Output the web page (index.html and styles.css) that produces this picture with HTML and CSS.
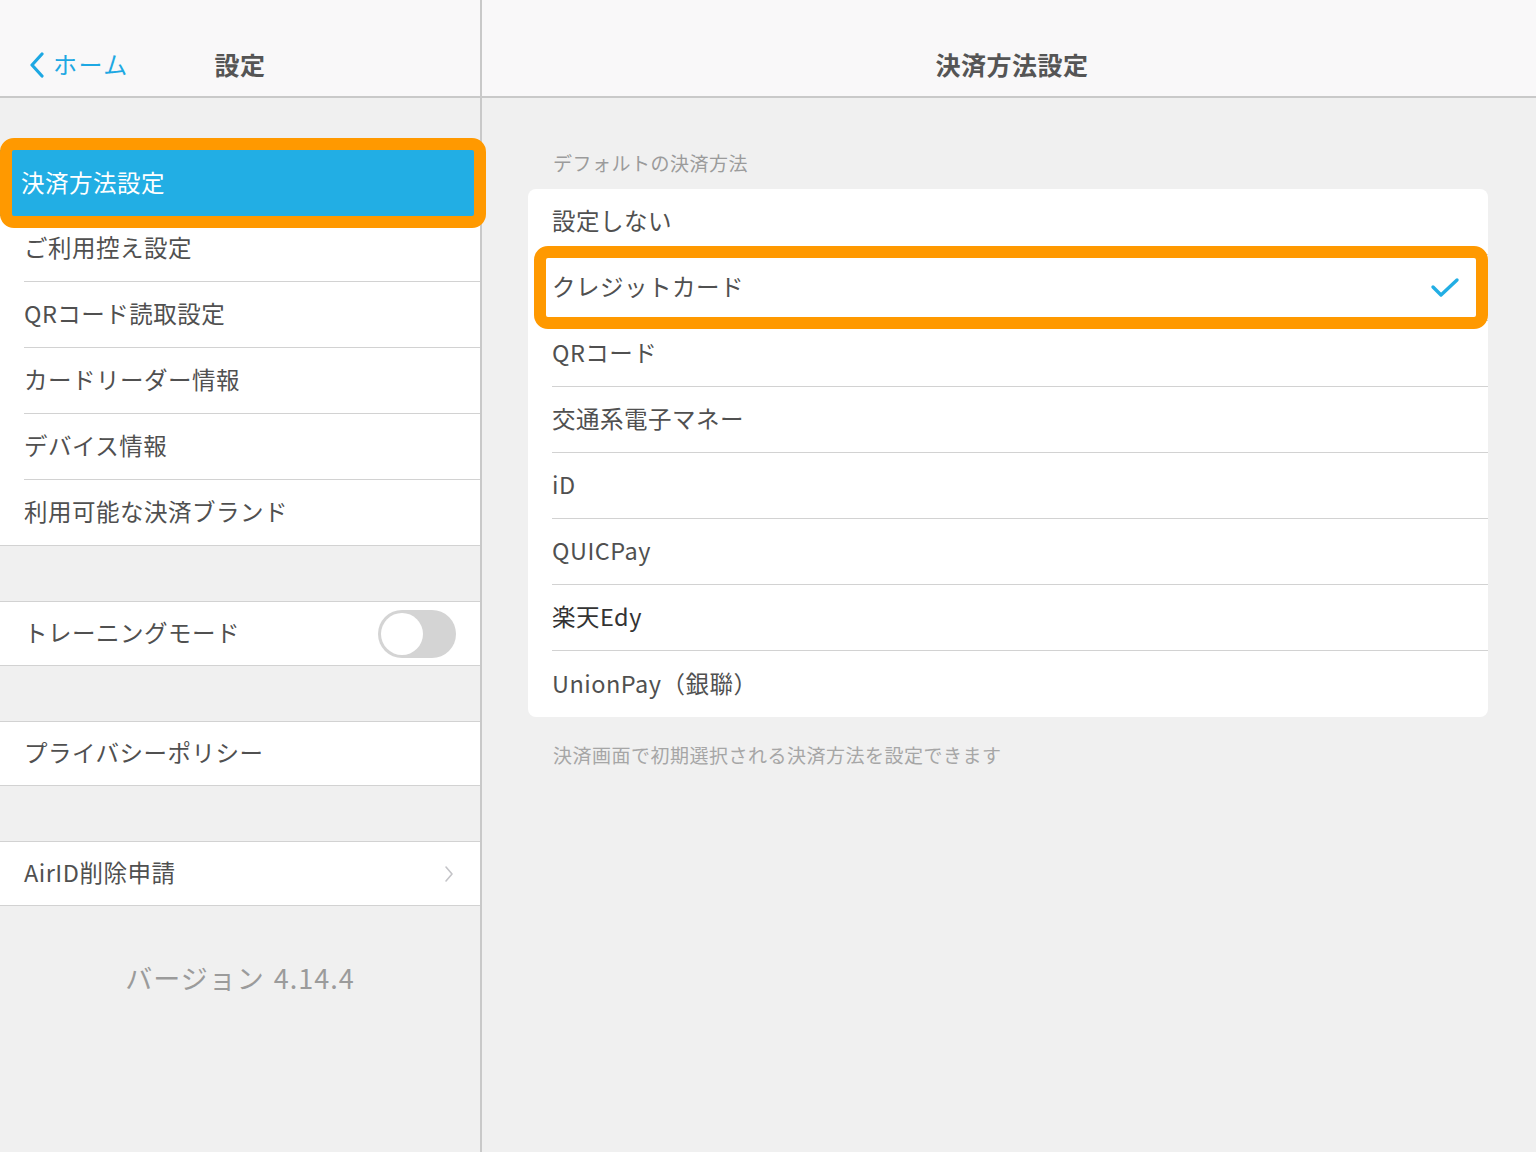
FILE: index.html
```html
<!DOCTYPE html>
<html lang="ja">
<head>
    <meta charset="UTF-8">
    <meta name="viewport" content="width=device-width, initial-scale=1.0">
    <title>決済方法設定</title>
    <link rel="stylesheet" href="styles.css">
</head>
<body>

<aside class="sidebar">
    <header class="navbar navbar-split">
        <a class="back-link" href="#">
            <svg class="back-icon" width="16" height="26" viewBox="0 0 16 26">
                <path d="M13 2 L3 13 L13 24" fill="none" stroke="currentColor" stroke-width="3.2" stroke-linecap="round" stroke-linejoin="round"/>
            </svg>
            <span>ホーム</span>
        </a>
        <h1 class="navbar-title">設定</h1>
        <span></span>
    </header>

    <div class="sidebar-body">
        <ul class="group group-first">
            <li class="row selected">
                <span class="row-label">決済方法設定</span>
                <span class="highlight highlight-menu"></span>
            </li>
            <li class="row"><span class="row-label">ご利用控え設定</span></li>
            <li class="row"><span class="row-label">QRコード読取設定</span></li>
            <li class="row"><span class="row-label">カードリーダー情報</span></li>
            <li class="row"><span class="row-label">デバイス情報</span></li>
            <li class="row"><span class="row-label">利用可能な決済ブランド</span></li>
        </ul>

        <ul class="group">
            <li class="row row-single">
                <span class="row-label">トレーニングモード</span>
                <span class="toggle"><span class="toggle-knob"></span></span>
            </li>
        </ul>

        <ul class="group">
            <li class="row row-single"><span class="row-label">プライバシーポリシー</span></li>
        </ul>

        <ul class="group">
            <li class="row row-single">
                <span class="row-label">AirID削除申請</span>
                <svg class="chevron" width="10" height="18" viewBox="0 0 10 18">
                    <path d="M2 2 L8 9 L2 16" fill="none" stroke="currentColor" stroke-width="1.6" stroke-linecap="round" stroke-linejoin="round"/>
                </svg>
            </li>
        </ul>

        <p class="version">バージョン 4.14.4</p>
    </div>
</aside>

<main class="main">
    <header class="navbar">
        <h1 class="navbar-title">決済方法設定</h1>
    </header>

    <div class="main-body">
        <h2 class="section-title">デフォルトの決済方法</h2>
        <ul class="card">
            <li class="card-row"><span class="card-label">設定しない</span></li>
            <li class="card-row checked">
                <span class="card-label">クレジットカード
                    <svg class="check" width="30" height="22" viewBox="0 0 30 22">
                        <path d="M3 10 L11 18 L27 3" fill="none" stroke="currentColor" stroke-width="3.4" stroke-linecap="round" stroke-linejoin="round"/>
                    </svg>
                </span>
                <span class="highlight highlight-option"></span>
            </li>
            <li class="card-row"><span class="card-label">QRコード</span></li>
            <li class="card-row"><span class="card-label">交通系電子マネー</span></li>
            <li class="card-row"><span class="card-label">iD</span></li>
            <li class="card-row"><span class="card-label">QUICPay</span></li>
            <li class="card-row"><span class="card-label dark">楽天Edy</span></li>
            <li class="card-row"><span class="card-label">UnionPay（銀聯）</span></li>
        </ul>
        <p class="section-note">決済画面で初期選択される決済方法を設定できます</p>
    </div>
</main>

</body>
</html>
```

FILE: styles.css
```css
* {
    box-sizing: border-box;
}
body {
    margin: 0;
    height: 100vh;
    display: flex;
    font-family: "Noto Sans CJK JP", "Noto Sans", sans-serif;
    color: #505050;
    background-color: #f0f0f0;
    letter-spacing: 0.5px;
    overflow: hidden;
}
ul {
    list-style: none;
    margin: 0;
    padding: 0;
}
h1, h2, p {
    margin: 0;
}

/* Navigation bars */
.navbar {
    height: 98px;
    padding-top: 31px;
    display: flex;
    align-items: center;
    justify-content: center;
    background-color: #f9f8f9;
    border-bottom: 2px solid #c9c9c9;
}
.navbar-split {
    display: grid;
    grid-template-columns: 1fr auto 1fr;
}
.navbar-title {
    font-size: 25px;
    font-weight: 700;
    color: #555555;
}
.main .navbar-title {
    margin-left: 6px;
}
.back-link {
    display: flex;
    align-items: center;
    gap: 8px;
    padding-left: 29px;
    color: #1ea8e3;
    text-decoration: none;
    font-size: 24px;
    letter-spacing: 1.5px;
}
.back-icon {
    margin-top: 3px;
}

/* Sidebar */
.sidebar {
    width: 482px;
    flex-shrink: 0;
    border-right: 2px solid #c9c9c9;
    display: flex;
    flex-direction: column;
}
.sidebar-body {
    flex: 1;
    padding-top: 52px;
}
.group {
    background-color: #ffffff;
    border-top: 1px solid #d2d2d2;
    border-bottom: 1px solid #d2d2d2;
    margin-top: 55px;
}
.group-first {
    margin-top: 0;
    border-top: none;
}
.row {
    display: flex;
    align-items: center;
    padding-left: 24px;
    font-size: 23.5px;
}
.row-label {
    flex: 1;
    height: 66px;
    padding-bottom: 3px;
    display: flex;
    align-items: center;
    border-bottom: 1px solid #d2d2d2;
}
.row:last-child .row-label {
    height: 65px;
    border-bottom: none;
}
.row-single {
    height: 63px;
    padding-right: 24px;
}
.row-single .row-label {
    height: 63px;
}
.row.selected {
    position: relative;
    background-color: #22aee4;
    color: #ffffff;
    padding-left: 21px;
}
.row.selected .row-label {
    border-bottom: none;
}

.toggle {
    width: 78px;
    height: 48px;
    padding: 3px;
    border-radius: 24px;
    background-color: #d4d4d4;
}
.toggle-knob {
    display: block;
    width: 42px;
    height: 42px;
    border-radius: 50%;
    background-color: #ffffff;
}
.chevron {
    color: #c4c4c8;
    margin-right: 2px;
}

.version {
    margin-top: 52px;
    text-align: center;
    font-size: 27px;
    letter-spacing: 1px;
    word-spacing: 2px;
    color: #9b9b9b;
}

/* Orange annotation boxes */
.highlight {
    position: absolute;
    border: 12px solid #ff9900;
    border-radius: 14px;
    z-index: 2;
    pointer-events: none;
}
.highlight-menu {
    top: -12px;
    bottom: -12px;
    left: 0;
    right: -6px;
}
.highlight-option {
    top: -9px;
    bottom: -8px;
    left: 6px;
    right: 0;
}

/* Main panel */
.main {
    flex: 1;
    display: flex;
    flex-direction: column;
}
.main-body {
    flex: 1;
    padding: 52px 48px 0 46px;
}
.section-title {
    font-size: 19px;
    font-weight: 400;
    line-height: 26px;
    color: #9b9b9b;
    padding-left: 25px;
    margin-bottom: 13px;
}
.card {
    background-color: #ffffff;
    border-radius: 8px;
}
.card-row {
    padding-left: 24px;
    font-size: 23.5px;
}
.card-row.checked {
    position: relative;
}
.card-label {
    height: 66px;
    padding-bottom: 3px;
    display: flex;
    align-items: center;
    justify-content: space-between;
    padding-right: 28px;
    border-bottom: 1px solid #d2d2d2;
}
.card-row:last-child .card-label {
    border-bottom: none;
}
.card-label.dark {
    color: #333333;
}
.check {
    color: #22aee4;
    margin-top: 3px;
}
.section-note {
    margin-top: 25px;
    padding-left: 25px;
    font-size: 19px;
    line-height: 26px;
    color: #a6a6a6;
}
```
